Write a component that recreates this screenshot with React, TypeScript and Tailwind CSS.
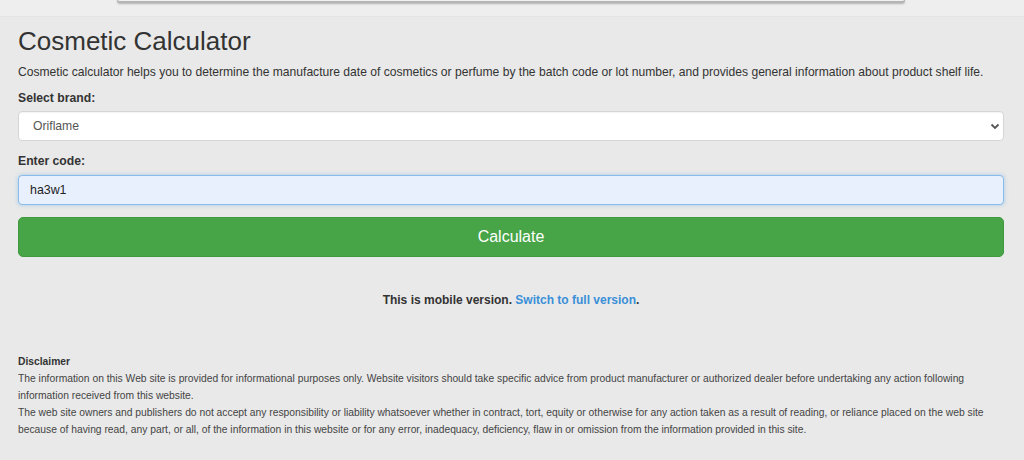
import React, { useState } from 'react'

export default function App() {
  const [brand, setBrand] = useState('Oriflame')
  const [code, setCode] = useState('ha3w1')

  return (
    <div className="min-h-[460px] bg-[#e9e9e9] font-['Liberation_Sans',Arial,sans-serif] text-[#333]">
      {/* top strip with the edge of the ad card */}
      <div className="h-[17px] bg-[#eeeeee] border-b border-[#e4e4e4]">
        <div className="ml-[117px] w-[788px] h-[3px] bg-[#f2f2f2] border-b-2 border-x border-[#b5b5b5] rounded-b-sm shadow-[0_1px_2px_rgba(0,0,0,0.25)]" />
      </div>

      <div className="pl-[18px] pr-[20px]">
        <h1 className="pt-[9px] text-[26px] leading-[30px] font-normal">Cosmetic Calculator</h1>
        <p className="mt-[6px] text-[12.1px] leading-[20px]">
          Cosmetic calculator helps you to determine the manufacture date of cosmetics or perfume by the batch code or lot number, and provides general information about product shelf life.
        </p>

        <form className="mt-[6px]" onSubmit={(e) => e.preventDefault()}>
          <label className="block text-[12.2px] leading-[20px] font-bold">Select brand:</label>
          <div className="relative mt-[3px]">
            <select
              value={brand}
              onChange={(e) => setBrand(e.target.value)}
              className="block w-full h-[30px] appearance-none bg-white border border-[#d6d6d6] rounded-[4px] pl-[14px] pr-8 text-[12.2px] text-[#555] shadow-[inset_0_1px_1px_rgba(0,0,0,0.05)] outline-none"
            >
              <option>Oriflame</option>
              <option>Avon</option>
              <option>Faberlic</option>
            </select>
            <svg className="absolute right-[4px] top-[12px] w-[10px] h-[7px] pointer-events-none" viewBox="0 0 10 7">
              <path d="M1.5 1.5 L5 5 L8.5 1.5" stroke="#555" strokeWidth="1.8" fill="none" />
            </svg>
          </div>

          <label className="block mt-[10px] text-[12.2px] leading-[20px] font-bold">Enter code:</label>
          <input
            value={code}
            onChange={(e) => setCode(e.target.value)}
            className="block w-full mt-[4px] h-[30px] bg-[#e8f0fe] border border-[#8bbbe8] rounded-[4px] px-[11px] text-[12.4px] text-[#222] shadow-[0_0_4px_rgba(102,175,233,0.5)] outline-none"
          />

          <button
            type="submit"
            className="block w-full mt-[12px] h-[40px] bg-[#47a447] border border-[#3f9a3f] rounded-[5px] text-white text-[16px]"
          >
            Calculate
          </button>
        </form>

        <p className="mt-[33px] text-center text-[12px] leading-[20px] font-bold">
          This is mobile version. <a href="#" className="text-[#3a8fd8]">Switch to full version</a>.
        </p>

        <div className="mt-[43px] text-[10.3px] leading-[17px] text-[#444]">
          <div className="font-bold text-[#333]">Disclaimer</div>
          <p>
            The information on this Web site is provided for informational purposes only. Website visitors should take specific advice from product manufacturer or authorized dealer before undertaking any action following information received from this website.
          </p>
          <p>
            The web site owners and publishers do not accept any responsibility or liability whatsoever whether in contract, tort, equity or otherwise for any action taken as a result of reading, or reliance placed on the web site because of having read, any part, or all, of the information in this website or for any error, inadequacy, deficiency, flaw in or omission from the information provided in this site.
          </p>
        </div>
      </div>
    </div>
  )
}
